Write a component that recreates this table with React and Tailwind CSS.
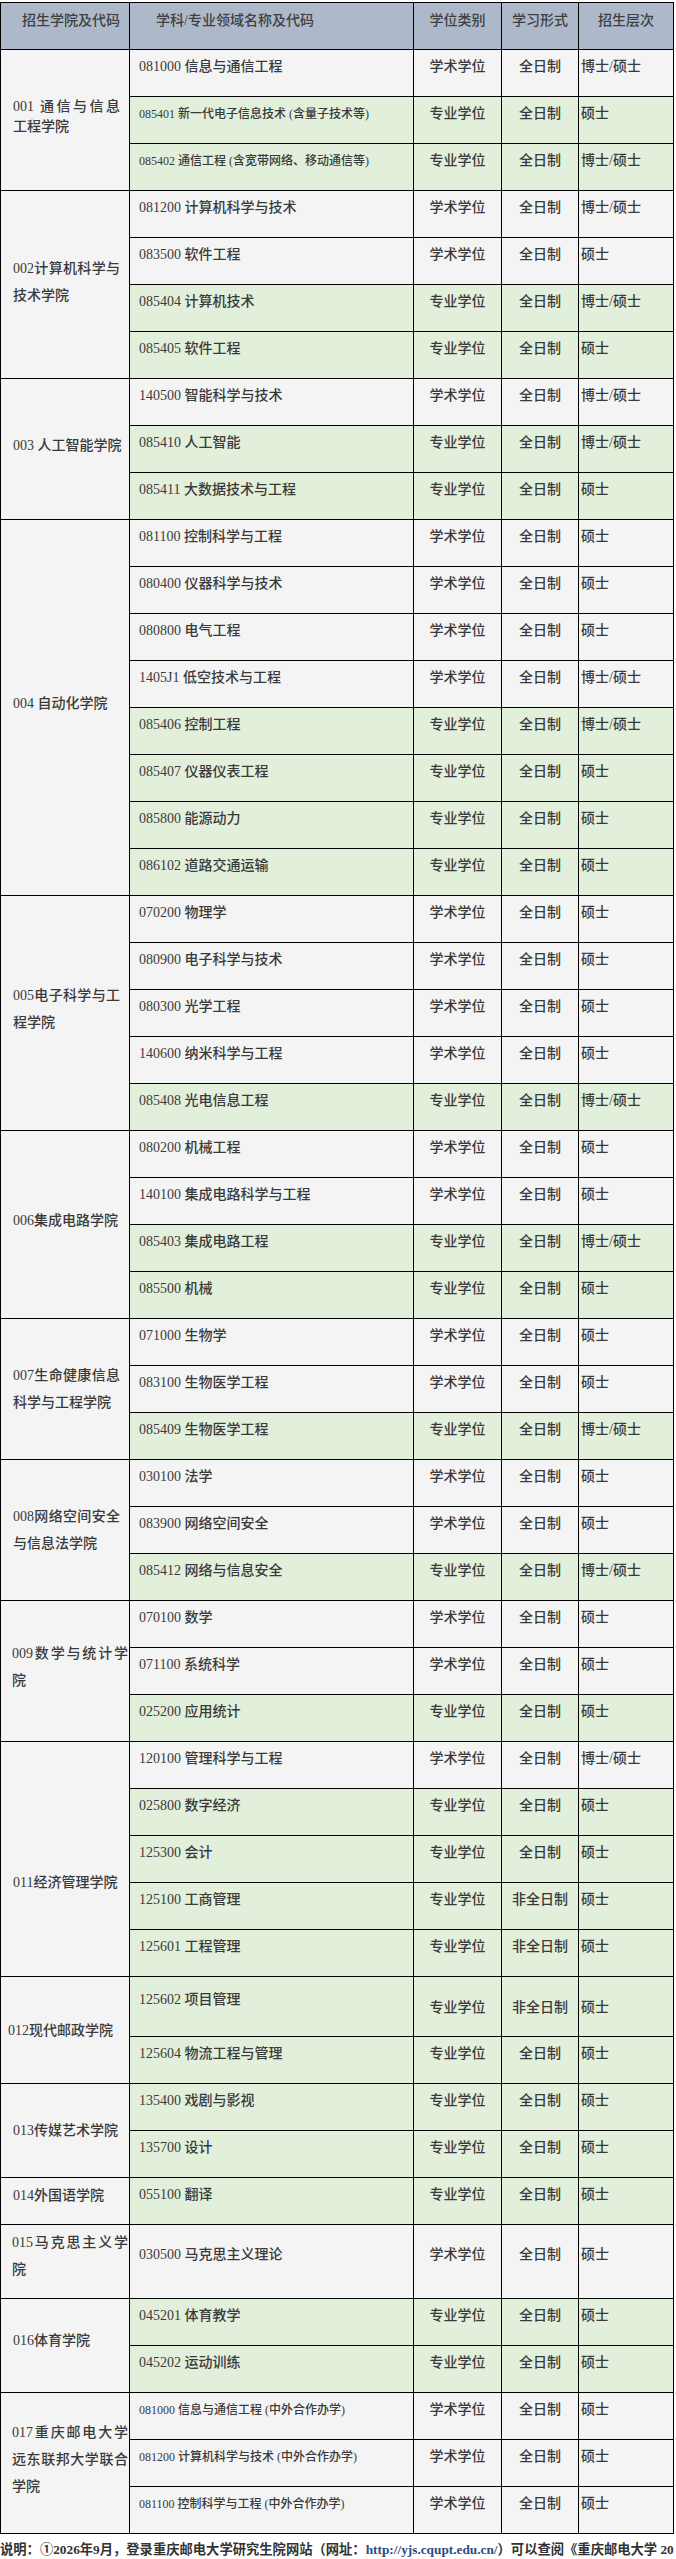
import React from 'react';

const A = '学术学位', P = '专业学位', F = '全日制', N = '非全日制', D = '博士/硕士', M = '硕士';

const data = [
  { lines: ['001 通信与信息', '工程学院'], lh: 'leading-[20px]', shift: 'pb-[6px]', rows: [
    ['081000 信息与通信工程', A, F, D],
    ['085401 新一代电子信息技术 (含量子技术等)', P, F, M, 'sm'],
    ['085402 通信工程 (含宽带网络、移动通信等)', P, F, D, 'sm'],
  ] },
  { lines: ['002计算机科学与', '技术学院'], shift: 'pb-[6px]', rows: [
    ['081200 计算机科学与技术', A, F, D],
    ['083500 软件工程', A, F, M],
    ['085404 计算机技术', P, F, D],
    ['085405 软件工程', P, F, M],
  ] },
  { lines: ['003 人工智能学院'], shift: 'pb-[7px]', rows: [
    ['140500 智能科学与技术', A, F, D],
    ['085410 人工智能', P, F, D],
    ['085411 大数据技术与工程', P, F, M],
  ] },
  { lines: ['004 自动化学院'], shift: 'pb-[9px]', rows: [
    ['081100 控制科学与工程', A, F, M],
    ['080400 仪器科学与技术', A, F, M],
    ['080800 电气工程', A, F, M],
    ['1405J1 低空技术与工程', A, F, D],
    ['085406 控制工程', P, F, D],
    ['085407 仪器仪表工程', P, F, M],
    ['085800 能源动力', P, F, M],
    ['086102 道路交通运输', P, F, M],
  ] },
  { lines: ['005电子科学与工', '程学院'], shift: 'pb-[9px]', rows: [
    ['070200 物理学', A, F, M],
    ['080900 电子科学与技术', A, F, M],
    ['080300 光学工程', A, F, M],
    ['140600 纳米科学与工程', A, F, M],
    ['085408 光电信息工程', P, F, D],
  ] },
  { lines: ['006集成电路学院'], shift: 'pb-[9px]', rows: [
    ['080200 机械工程', A, F, M],
    ['140100 集成电路科学与工程', A, F, M],
    ['085403 集成电路工程', P, F, D],
    ['085500 机械', P, F, M],
  ] },
  { lines: ['007生命健康信息', '科学与工程学院'], shift: '', rows: [
    ['071000 生物学', A, F, M],
    ['083100 生物医学工程', A, F, M],
    ['085409 生物医学工程', P, F, D],
  ] },
  { lines: ['008网络空间安全', '与信息法学院'], shift: '', rows: [
    ['030100 法学', A, F, M],
    ['083900 网络空间安全', A, F, M],
    ['085412 网络与信息安全', P, F, D],
  ] },
  { lines: ['009数学与统计学', '院'], wide: true, shift: 'pb-[8px]', rows: [
    ['070100 数学', A, F, M],
    ['071100 系统科学', A, F, M],
    ['025200 应用统计', P, F, M],
  ] },
  { lines: ['011经济管理学院'], shift: 'pt-[47px]', rows: [
    ['120100 管理科学与工程', A, F, D],
    ['025800 数字经济', P, F, M],
    ['125300 会计', P, F, M],
    ['125100 工商管理', P, N, M],
    ['125601 工程管理', P, N, M],
  ] },
  { lines: ['012现代邮政学院'], shift: '', pl: 'pl-[7px]', rows: [
    ['125602 项目管理', P, N, M, 't60'],
    ['125604 物流工程与管理', P, F, M],
  ] },
  { lines: ['013传媒艺术学院'], shift: '', rows: [
    ['135400 戏剧与影视', P, F, M],
    ['135700 设计', P, F, M],
  ] },
  { lines: ['014外国语学院'], shift: 'pb-[12px]', rows: [
    ['055100 翻译', P, F, M],
  ] },
  { lines: ['015马克思主义学', '院'], wide: true, shift: 'pb-[12px]', rows: [
    ['030500 马克思主义理论', A, F, M, 't73'],
  ] },
  { lines: ['016体育学院'], shift: 'pb-[10px]', rows: [
    ['045201 体育教学', P, F, M],
    ['045202 运动训练', P, F, M],
  ] },
  { lines: ['017重庆邮电大学', '远东联邦大学联合', '学院'], wide: true, shift: 'pb-[7px]', rows: [
    ['081000 信息与通信工程 (中外合作办学)', A, F, M, 'sm'],
    ['081200 计算机科学与技术 (中外合作办学)', A, F, M, 'sm'],
    ['081100 控制科学与工程 (中外合作办学)', A, F, M, 'sm'],
  ] },
];

function Row({ r }) {
  const [name, type, form, level, v] = r;
  const bg = type === A ? 'bg-[#f4f4f4]' : 'bg-[#e2efda]';
  let h = 'h-[46px]';
  let pt2 = 'pt-[6px]';
  let pt = 'pt-[6px]';
  if (v === 't60') { h = 'h-[59px]'; pt2 = 'pt-[12px]'; pt = 'pt-[20px]'; }
  if (v === 't73') { h = 'h-[73px]'; pt2 = 'pt-[19px]'; pt = 'pt-[19px]'; }
  const size2 = v === 'sm' ? 'text-[12px]' : 'text-[14px]';
  return (
    <div className={`grid grid-cols-[283px_87px_76px_94px] gap-px ${h}`}>
      <div className={`${bg} ${pt2} pl-[9px] ${size2} leading-[22px] whitespace-nowrap`}>{name}</div>
      <div className={`${bg} ${pt} text-center text-[14px] leading-[22px]`}>{type}</div>
      <div className={`${bg} ${pt} text-center text-[14px] leading-[22px]`}>{form}</div>
      <div className={`${bg} ${pt} pl-[2px] text-[14px] leading-[22px]`}>{level}</div>
    </div>
  );
}

function College({ c }) {
  const lh = c.lh || 'leading-[27px]';
  const pl = c.pl || (c.wide ? 'pl-[11px]' : 'pl-[12px]');
  const w = c.wide ? 'w-[116px]' : 'w-[107px]';
  return (
    <div className="flex gap-px">
      <div className={`w-[128px] shrink-0 bg-[#f4f4f4] flex flex-col justify-center ${pl} ${c.shift} text-[14px] ${lh}`}>
        {c.lines.map((l, i) =>
          i < c.lines.length - 1 ? (
            <div key={i} className={`${w} whitespace-nowrap [text-align-last:justify] text-justify`}>{l}</div>
          ) : (
            <div key={i} className="whitespace-nowrap">{l}</div>
          )
        )}
      </div>
      <div className="flex flex-col gap-px">
        {c.rows.map((r, i) => <Row key={i} r={r} />)}
      </div>
    </div>
  );
}

export default function App() {
  return (
    <div className="w-[676px] min-h-[2559px] bg-white overflow-hidden text-[#3a3a3a] font-medium font-['Liberation_Serif','Noto_Sans_CJK_SC',serif]">
      <div className="mt-[2px] w-[674px] bg-black p-px flex flex-col gap-px">
        <div className="grid grid-cols-[128px_283px_87px_76px_94px] gap-px h-[46px] text-[14px] leading-[22px] text-[#404040]">
          <div className="bg-[#adb9ca] pt-[7px] pl-[21px] whitespace-nowrap">招生学院及代码</div>
          <div className="bg-[#adb9ca] pt-[7px] pl-[26px] whitespace-nowrap">学科/专业领域名称及代码</div>
          <div className="bg-[#adb9ca] pt-[7px] text-center">学位类别</div>
          <div className="bg-[#adb9ca] pt-[7px] text-center">学习形式</div>
          <div className="bg-[#adb9ca] pt-[7px] text-center">招生层次</div>
        </div>
        {data.map((c, i) => <College key={i} c={c} />)}
      </div>
      <div className="mt-[6px] whitespace-nowrap text-[13.3px] leading-[20px] font-bold text-[#333333]">
        说明：①2026年9月，登录重庆邮电大学研究生院网站（网址：<span className="text-[#2a4d80]">http://yjs.cqupt.edu.cn/</span>）可以查阅《重庆邮电大学 20
      </div>
    </div>
  );
}
